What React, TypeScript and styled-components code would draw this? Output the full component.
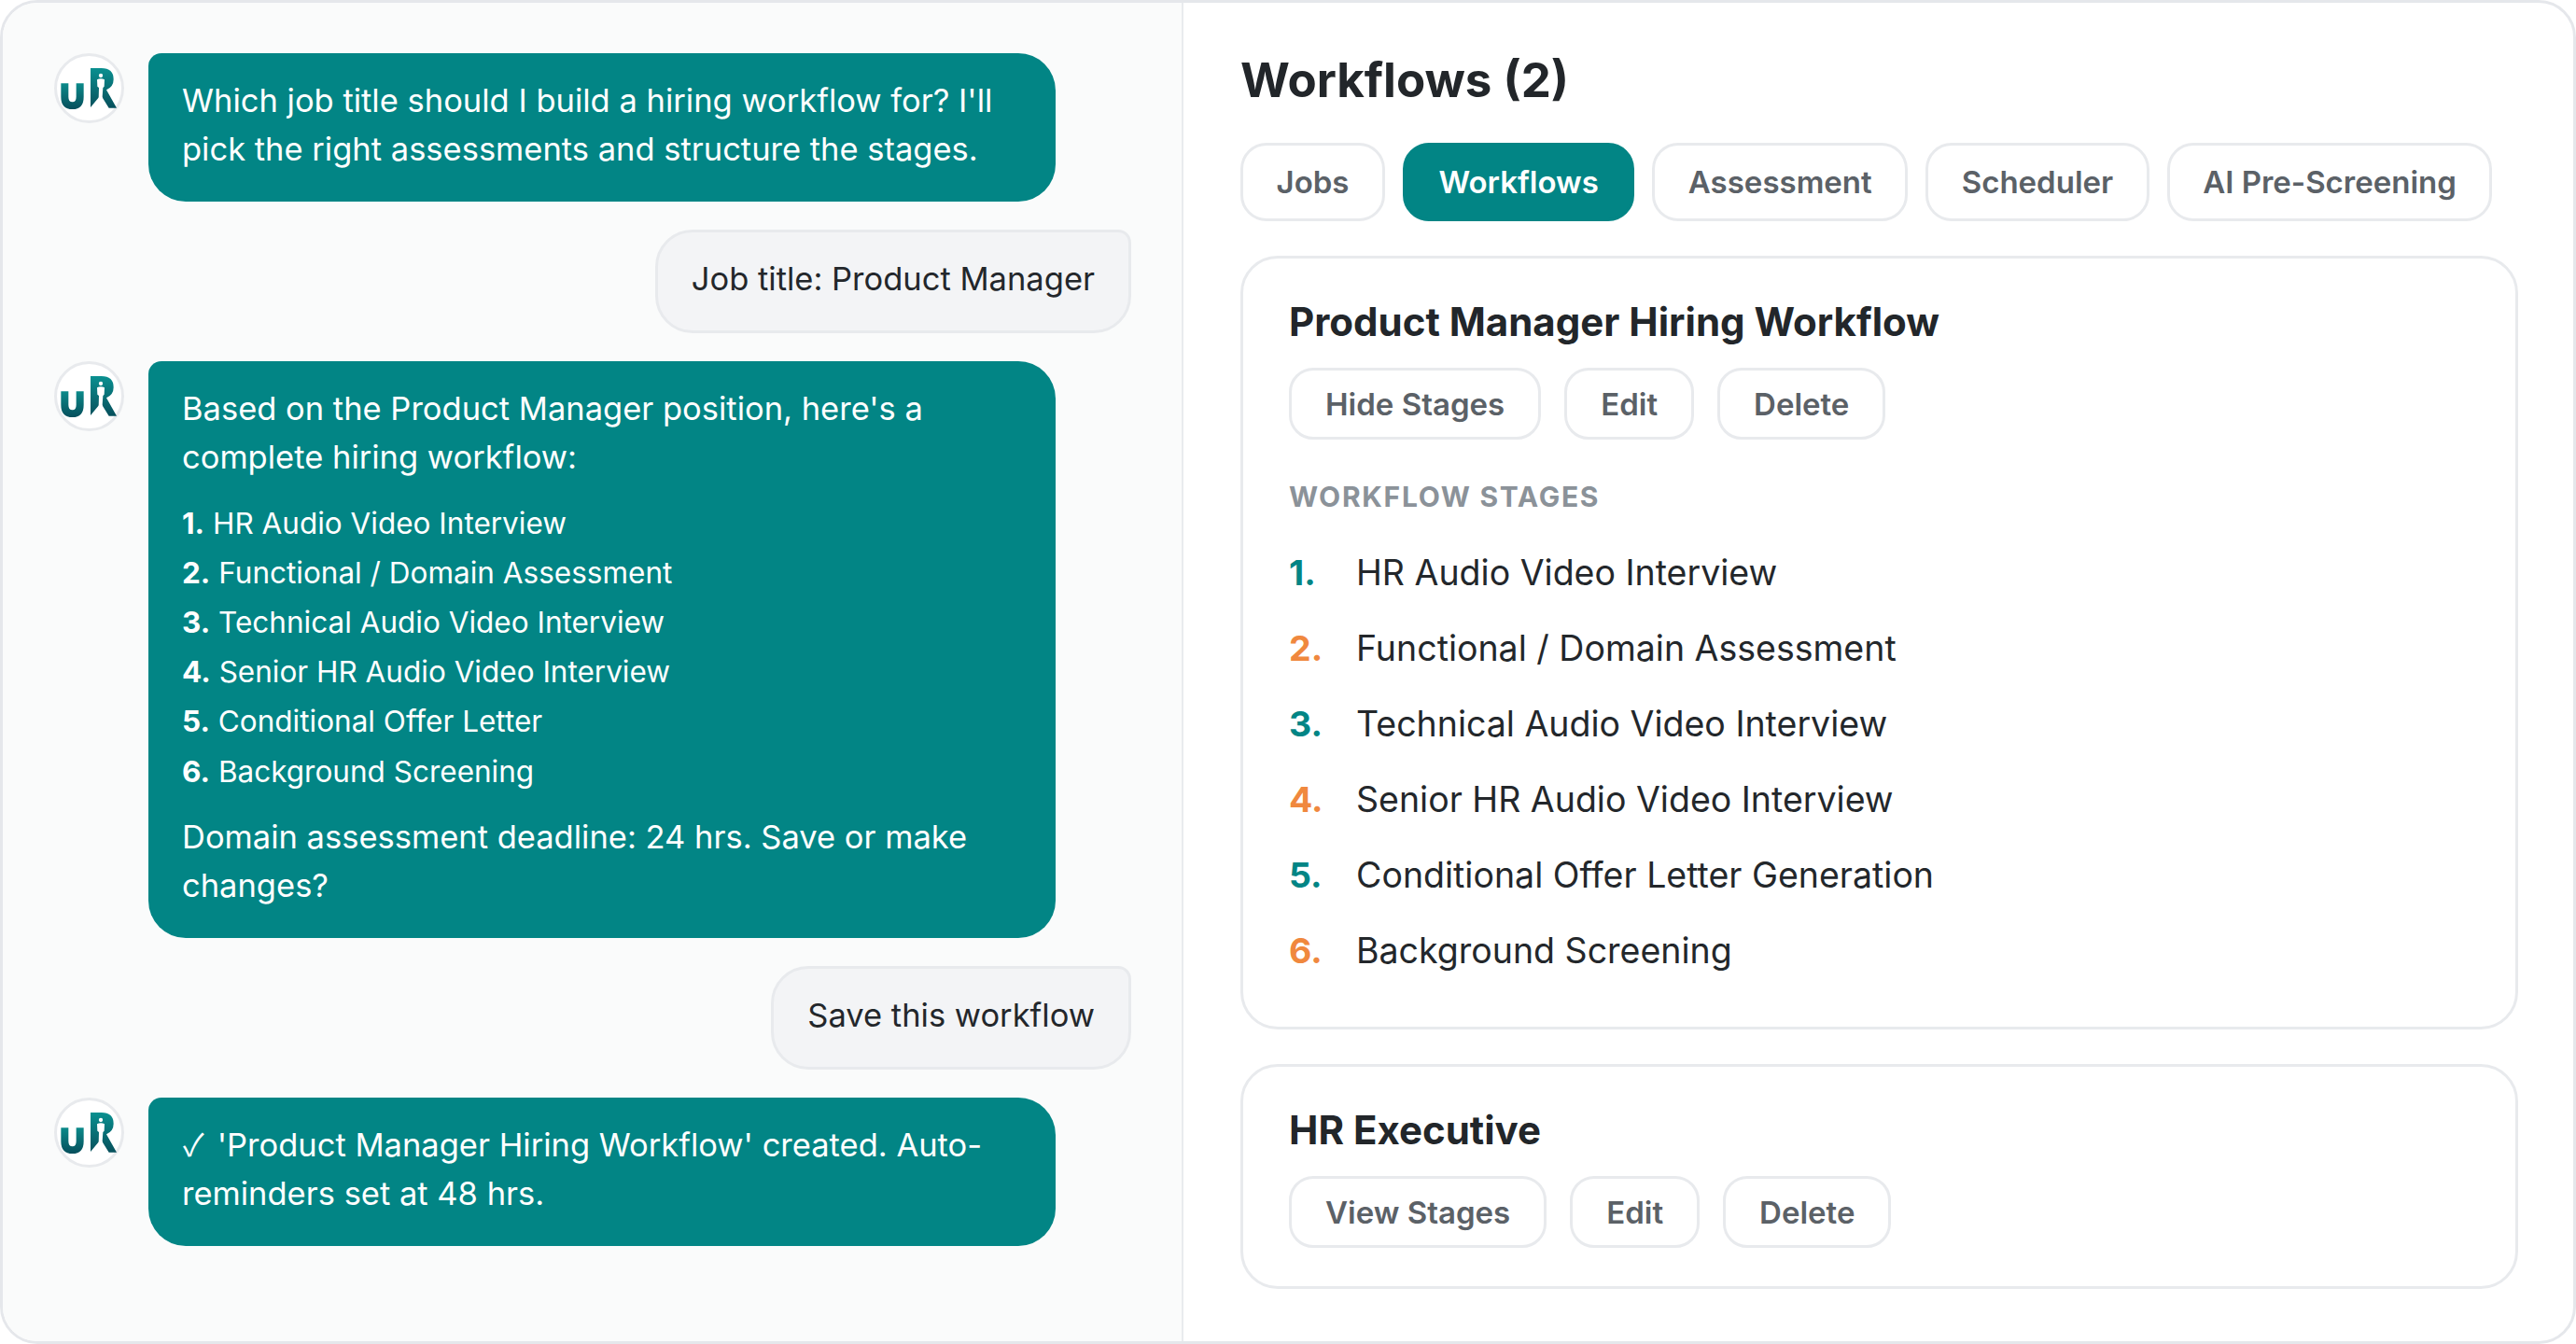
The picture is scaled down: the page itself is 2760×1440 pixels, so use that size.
import React from "react"
import styled, { createGlobalStyle } from "styled-components"

const TEAL = "#028585"
const ORANGE = "#f0883e"

const GlobalStyle = createGlobalStyle`
  html, body {
    margin: 0;
    padding: 0;
    background: #fff;
  }
  * {
    box-sizing: border-box;
  }
  body {
    font-family: Inter, "Noto Sans", "Liberation Sans", sans-serif;
  }
`

const tabs = ["Jobs", "Workflows", "Assessment", "Scheduler", "AI Pre-Screening"]
const chatSteps = [
  "HR Audio Video Interview",
  "Functional / Domain Assessment",
  "Technical Audio Video Interview",
  "Senior HR Audio Video Interview",
  "Conditional Offer Letter",
  "Background Screening"
]
const stages = [
  "HR Audio Video Interview",
  "Functional / Domain Assessment",
  "Technical Audio Video Interview",
  "Senior HR Audio Video Interview",
  "Conditional Offer Letter Generation",
  "Background Screening"
]

function Logo() {
  return (
    <LogoMark viewBox="0 0 225 225">
      <defs>
        <linearGradient id="logoU" x1="0" y1="0" x2="0" y2="1">
          <stop offset="0" stopColor="#0b8a8a" />
          <stop offset="1" stopColor="#064f5c" />
        </linearGradient>
        <linearGradient id="logoR" x1="0" y1="0" x2="0" y2="1">
          <stop offset="0" stopColor="#0a9090" />
          <stop offset="1" stopColor="#07505c" />
        </linearGradient>
      </defs>
      <path
        d="M22 97H46V140Q46 157 59 157Q71 157 71 140V97H95V140Q95 180 59 180Q22 180 22 140Z"
        fill="url(#logoU)"
      />
      <path
        d="M117 48H152Q191 48 191 84Q191 108 168 118L201 176H176L150 134L117 174Z"
        fill="url(#logoR)"
      />
      <circle cx="150" cy="72" r="6.5" fill="#fff" />
      <path
        d="M138 85Q150 78 162 85L161 107L157 111L155 140L159 166L152 150H147L130 174L143 146L144 111L139 107Z"
        fill="#fff"
      />
    </LogoMark>
  )
}

export default function App() {
  return (
    <>
      <GlobalStyle />
      <Frame>
        <ChatPane>
          <BotRow>
            <Avatar>
              <Logo />
            </Avatar>
            <BotBubble>
              Which job title should I build a hiring workflow for? I'll pick
              the right assessments and structure the stages.
            </BotBubble>
          </BotRow>
          <UserBubble>Job title: Product Manager</UserBubble>
          <BotRow>
            <Avatar>
              <Logo />
            </Avatar>
            <BotBubble>
              Based on the Product Manager position, here's a complete hiring
              workflow:
              <ChatList>
                {chatSteps.map((step, i) => (
                  <ChatStep key={step}>
                    <strong>{i + 1}.</strong> {step}
                  </ChatStep>
                ))}
              </ChatList>
              Domain assessment deadline: 24 hrs. Save or make changes?
            </BotBubble>
          </BotRow>
          <UserBubble>Save this workflow</UserBubble>
          <BotRow>
            <Avatar>
              <Logo />
            </Avatar>
            <BotBubble>
              <Check>✓</Check> 'Product Manager Hiring Workflow' created. Auto-
              <br />
              reminders set at 48 hrs.
            </BotBubble>
          </BotRow>
        </ChatPane>
        <WorkPane>
          <PageTitle>Workflows (2)</PageTitle>
          <TabBar>
            {tabs.map(tab => (
              <Tab key={tab} $active={tab === "Workflows"}>
                {tab}
              </Tab>
            ))}
          </TabBar>
          <Card>
            <CardTitle>Product Manager Hiring Workflow</CardTitle>
            <Actions>
              <ActionButton>Hide Stages</ActionButton>
              <ActionButton>Edit</ActionButton>
              <ActionButton>Delete</ActionButton>
            </Actions>
            <StagesLabel>Workflow Stages</StagesLabel>
            <StageList>
              {stages.map((stage, i) => (
                <Stage key={stage}>
                  <StageNumber $odd={i % 2 === 0}>{i + 1}.</StageNumber>
                  {stage}
                </Stage>
              ))}
            </StageList>
          </Card>
          <Card>
            <CardTitle>HR Executive</CardTitle>
            <Actions>
              <ActionButton>View Stages</ActionButton>
              <ActionButton>Edit</ActionButton>
              <ActionButton>Delete</ActionButton>
            </Actions>
          </Card>
        </WorkPane>
      </Frame>
    </>
  )
}

const Frame = styled.div`
  width: 2760px;
  height: 1440px;
  display: grid;
  grid-template-columns: 1265px 1fr;
  border: 3px solid #e5e7eb;
  border-radius: 40px;
  overflow: hidden;
  background: #fff;
`

const ChatPane = styled.div`
  display: flex;
  flex-direction: column;
  gap: 30px;
  padding: 54px 54px 0 55px;
  background: #fafbfb;
  border-right: 2px solid #e9ebee;
`

const BotRow = styled.div`
  display: flex;
  align-items: flex-start;
  gap: 26px;
`

const Avatar = styled.div`
  flex: none;
  width: 75px;
  height: 75px;
  display: flex;
  align-items: center;
  justify-content: center;
  background: #fff;
  border: 3px solid #e8eaed;
  border-radius: 50%;
`

const LogoMark = styled.svg`
  flex: none;
  width: 75px;
  height: 75px;
`

const BotBubble = styled.div`
  width: 972px;
  padding: 25px 36px 31px;
  background: ${TEAL};
  color: #fff;
  font-size: 34.5px;
  line-height: 51.5px;
  border-radius: 14px 40px 40px 40px;
`

const Check = styled.span`
  display: inline-block;
  width: 27px;
  margin-left: 1px;
  font-family: "Noto Sans CJK JP", "DejaVu Sans", sans-serif;
  font-size: 33px;
  line-height: 0;
`

const UserBubble = styled.div`
  align-self: flex-end;
  padding: 24px 36px 29px;
  background: #f3f4f6;
  color: #23272b;
  font-size: 34.5px;
  line-height: 52px;
  border: 3px solid #e8eaed;
  border-radius: 40px 14px 40px 40px;
`

const ChatList = styled.div`
  display: flex;
  flex-direction: column;
  margin: 18.5px 0 18.5px;
`

const ChatStep = styled.div`
  font-size: 31.5px;
  line-height: 53.2px;
  strong {
    font-weight: 700;
  }
`

const WorkPane = styled.div`
  display: flex;
  flex-direction: column;
  padding: 51px 59px 0 61px;
`

const PageTitle = styled.h1`
  margin: 0;
  color: #22262a;
  font-size: 51px;
  line-height: 64px;
  font-weight: 700;
`

const TabBar = styled.div`
  display: flex;
  gap: 19px;
  margin-top: 35px;
`

const Tab = styled.button<{ $active?: boolean }>`
  height: 84px;
  padding: 0 35.5px;
  background: ${p => (p.$active ? TEAL : "#fff")};
  color: ${p => (p.$active ? "#fff" : "#5b6167")};
  font-family: inherit;
  font-size: 33px;
  font-weight: 560;
  white-space: nowrap;
  border: 3px solid ${p => (p.$active ? TEAL : "#e8eaed")};
  border-radius: 28px;
`

const Card = styled.div`
  margin-top: 37px;
  padding: 40px 49px 41px;
  border: 3px solid #e8eaed;
  border-radius: 40px;
  background: #fff;
`

const CardTitle = styled.h2`
  margin: 0;
  color: #22262a;
  font-size: 42px;
  line-height: 56px;
  font-weight: 700;
`

const Actions = styled.div`
  display: flex;
  gap: 25px;
  margin-top: 21px;
`

const ActionButton = styled.button`
  height: 77px;
  padding: 0 36px;
  background: #fff;
  color: #5b6167;
  font-family: inherit;
  font-size: 33px;
  font-weight: 560;
  white-space: nowrap;
  border: 3px solid #e8eaed;
  border-radius: 26px;
`

const StagesLabel = styled.div`
  margin-top: 43px;
  color: #8b9299;
  font-size: 30px;
  line-height: 36px;
  font-weight: 700;
  letter-spacing: 1.7px;
  text-transform: uppercase;
`

const StageList = styled.div`
  display: flex;
  flex-direction: column;
  margin-top: 23px;
`

const Stage = styled.div`
  display: flex;
  height: 81px;
  align-items: center;
  color: #23272b;
  font-size: 37.5px;
`

const StageNumber = styled.span<{ $odd: boolean }>`
  width: 72px;
  flex: none;
  color: ${p => (p.$odd ? TEAL : ORANGE)};
  font-weight: 700;
`
